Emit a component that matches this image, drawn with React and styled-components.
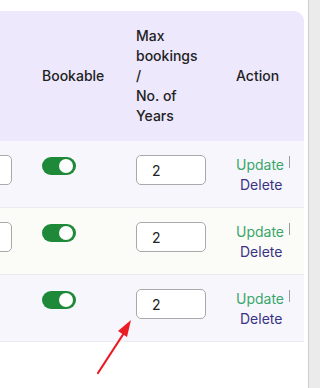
import React from 'react'
import styled, { createGlobalStyle } from 'styled-components'

const GlobalStyle = createGlobalStyle`
  html, body {
    margin: 0;
    padding: 0;
    background: #ffffff;
    font-family: Inter, "Noto Sans", Arial, sans-serif;
  }
`

const Page = styled.div`
  position: relative;
  display: flex;
  width: 320px;
  height: 388px;
  overflow: hidden;
`

const Main = styled.div`
  flex: 1;
  padding: 11px 4px 0 0;
`

const ScrollTrack = styled.div`
  width: 11px;
  background: #ebebeb;
  border-left: 1px solid #cdcdcd;
`

const Viewport = styled.div`
  overflow: hidden;
  border-top-right-radius: 10px;
`

const Table = styled.table`
  width: 377px;
  margin-left: -73px;
  border-collapse: collapse;
  table-layout: fixed;
`

const HeadCell = styled.th`
  background: #ede8fc;
  color: #222222;
  font-size: 14px;
  font-weight: 500;
  line-height: 20px;
  text-align: left;
  vertical-align: middle;
  padding: 15px;
  width: ${(p) => p.$w}px;
`

const Row = styled.tr`
  background: ${(p) => (p.$alt ? '#fbfbf8' : '#f7f6fc')};
  border-bottom: 1px solid #ececf0;
`

const Cell = styled.td`
  vertical-align: top;
  padding: 14px 15px 12px;
  font-size: 14px;
  line-height: 20px;
`

const Toggle = styled.span`
  display: block;
  position: relative;
  width: 34px;
  height: 18px;
  margin-top: 2px;
  border-radius: 9px;
  background: #1e8a39;

  &::after {
    content: '';
    position: absolute;
    top: 2px;
    right: 3px;
    width: 14px;
    height: 14px;
    border-radius: 50%;
    background: #ffffff;
  }
`

const NumberInput = styled.input`
  display: block;
  box-sizing: border-box;
  width: 70px;
  height: 30px;
  padding: 0 15px;
  border: 1px solid #a9a9a9;
  border-radius: 5px;
  background: #ffffff;
  font-family: Inter, "Noto Sans", Arial, sans-serif;
  font-size: 14px;
  color: #222222;
  outline: none;
`

const Actions = styled.div`
  display: flex;
  flex-direction: column;
  align-items: flex-start;
`

const UpdateLine = styled.div`
  display: flex;
  align-items: flex-start;
`

const UpdateLink = styled.span`
  color: #3aa66a;
`

const Pipe = styled.span`
  width: 1px;
  height: 12px;
  margin: 1px 0 0 5px;
  background: #9a9a9a;
`

const DeleteLink = styled.span`
  color: #3a3384;
  margin-left: 4px;
`

const Arrow = styled.svg`
  position: absolute;
  left: 0;
  top: 0;
  pointer-events: none;
`

const rows = [
  { id: 1, max: '2' },
  { id: 2, max: '2', alt: true },
  { id: 3, max: '2', hideFirst: true },
]

export default function App() {
  return (
    <>
      <GlobalStyle />
      <Page>
        <Main>
          <Viewport>
            <Table>
              <thead>
                <tr>
                  <HeadCell $w={70} />
                  <HeadCell $w={64}>Bookable</HeadCell>
                  <HeadCell $w={70}>
                    Max
                    <br />
                    bookings
                    <br />
                    /
                    <br />
                    No. of
                    <br />
                    Years
                  </HeadCell>
                  <HeadCell $w={53}>Action</HeadCell>
                </tr>
              </thead>
              <tbody>
                {rows.map((r) => (
                  <Row key={r.id} $alt={r.alt}>
                    <Cell>{!r.hideFirst && <NumberInput defaultValue="" />}</Cell>
                    <Cell>
                      <Toggle />
                    </Cell>
                    <Cell>
                      <NumberInput defaultValue={r.max} />
                    </Cell>
                    <Cell>
                      <Actions>
                        <UpdateLine>
                          <UpdateLink>Update</UpdateLink>
                          <Pipe />
                        </UpdateLine>
                        <DeleteLink>Delete</DeleteLink>
                      </Actions>
                    </Cell>
                  </Row>
                ))}
              </tbody>
            </Table>
          </Viewport>
        </Main>
        <ScrollTrack />
        <Arrow width="320" height="388" viewBox="0 0 320 388">
          <line x1="98" y1="373" x2="124" y2="333" stroke="#ec1c24" strokeWidth="2.2" strokeLinecap="round" />
          <polygon points="131,320 118,331 127,337" fill="#ec1c24" />
        </Arrow>
      </Page>
    </>
  )
}
